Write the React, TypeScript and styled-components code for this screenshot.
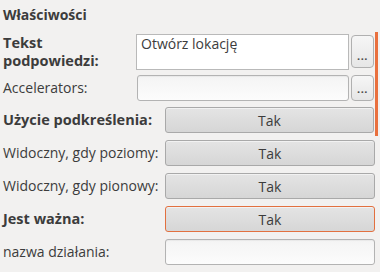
import React from "react";
import styled, { createGlobalStyle } from "styled-components";

const GlobalStyle = createGlobalStyle`
  html, body {
    margin: 0;
    padding: 0;
    background: #f2f1f0;
  }
  body {
    font-family: "Open Sans", "DejaVu Sans", sans-serif;
    font-size: 14px;
    color: #3c3c3c;
  }
`;

const Panel = styled.div`
  width: 380px;
  height: 272px;
  box-sizing: border-box;
  padding: 5px 0 0 3px;
  display: flex;
  flex-direction: column;
  overflow: hidden;
`;

const Heading = styled.div`
  font-weight: 700;
  font-size: 14px;
  height: 19px;
  line-height: 19px;
  margin-bottom: 8px;
`;

const Group = styled.div`
  display: flex;
  flex-direction: column;
  gap: 6px;
  border-right: 3px solid #e9703e;
  padding: 2px 1px 3px 0;
  margin-right: 2px;
`;

const Rows = styled.div`
  display: flex;
  flex-direction: column;
  gap: 7px;
  padding-top: 4px;
  padding-right: 5px;
`;

const Row = styled.div<{ $labelWidth: number; $height?: number }>`
  display: grid;
  grid-template-columns: ${(p) => p.$labelWidth}px 1fr auto;
  align-items: center;
  height: ${(p) => p.$height ?? 26}px;
  column-gap: 2px;
`;

const Label = styled.div<{ $bold?: boolean }>`
  font-weight: ${(p) => (p.$bold ? 700 : 400)};
  font-size: ${(p) => (p.$bold ? 14.5 : 14)}px;
  line-height: 18px;
  white-space: nowrap;
`;

const TextArea = styled.div`
  height: 100%;
  box-sizing: border-box;
  background: #ffffff;
  border: 1px solid #b9b9b9;
  padding: 0 4px;
  line-height: 18px;
`;

const Entry = styled.div`
  height: 100%;
  box-sizing: border-box;
  border: 1px solid #b3b3b3;
  border-radius: 3px;
  background: linear-gradient(#f4f4f4, #fcfcfc);
  box-shadow: inset 0 1px 1px rgba(0, 0, 0, 0.05);
`;

const DotsButton = styled.div<{ $tall?: boolean }>`
  width: 23px;
  height: ${(p) => (p.$tall ? 33 : 26)}px;
  align-self: ${(p) => (p.$tall ? "start" : "center")};
  margin-top: ${(p) => (p.$tall ? 1 : 0)}px;
  box-sizing: border-box;
  border: 1px solid #b0b0b0;
  border-radius: 4px;
  background: linear-gradient(#f6f6f6, #e6e6e6);
  display: flex;
  align-items: flex-end;
  justify-content: center;
  padding-bottom: 7px;
  font-size: 11px;
  font-weight: 700;
  line-height: 8px;
  letter-spacing: 0.5px;
  color: #4a4a4a;
`;

const ToggleButton = styled.div<{ $focused?: boolean }>`
  grid-column: 2 / 4;
  height: 100%;
  box-sizing: border-box;
  border: 1px solid ${(p) => (p.$focused ? "#e2703f" : "#a9a9a9")};
  border-radius: 3px;
  background: linear-gradient(#e4e4e4, #d6d6d6);
  box-shadow: inset 0 1px 0 rgba(255, 255, 255, 0.5);
  display: flex;
  align-items: center;
  justify-content: center;
`;

const WideEntry = styled(Entry)`
  grid-column: 2 / 4;
`;

export default function App() {
  return (
    <>
      <GlobalStyle />
      <Panel>
        <Heading>Właściwości</Heading>
        <Group>
          <Row $labelWidth={131} $height={35}>
            <Label $bold>
              Tekst
              <br />
              podpowiedzi:
            </Label>
            <TextArea>Otwórz lokację</TextArea>
            <DotsButton $tall>...</DotsButton>
          </Row>
          <Row $labelWidth={132}>
            <Label>Accelerators:</Label>
            <Entry />
            <DotsButton>...</DotsButton>
          </Row>
          <Row $labelWidth={160}>
            <Label $bold>Użycie podkreślenia:</Label>
            <ToggleButton>Tak</ToggleButton>
          </Row>
        </Group>
        <Rows>
          <Row $labelWidth={160}>
            <Label>Widoczny, gdy poziomy:</Label>
            <ToggleButton>Tak</ToggleButton>
          </Row>
          <Row $labelWidth={160}>
            <Label>Widoczny, gdy pionowy:</Label>
            <ToggleButton>Tak</ToggleButton>
          </Row>
          <Row $labelWidth={160}>
            <Label $bold>Jest ważna:</Label>
            <ToggleButton $focused>Tak</ToggleButton>
          </Row>
          <Row $labelWidth={160}>
            <Label>nazwa działania:</Label>
            <WideEntry />
          </Row>
        </Rows>
      </Panel>
    </>
  );
}
